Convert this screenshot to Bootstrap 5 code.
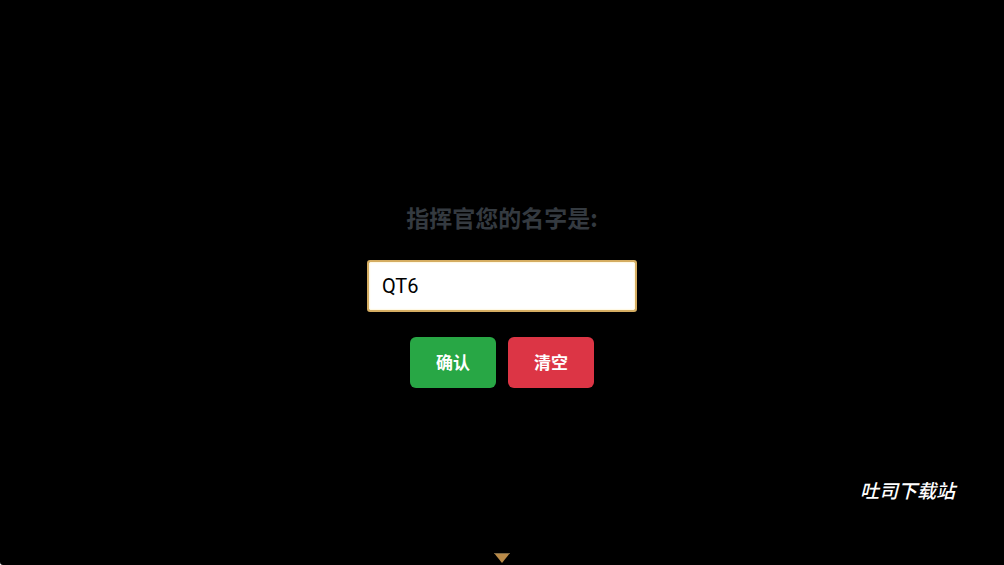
<!DOCTYPE html>
<html lang="zh-CN">
<head>
<meta charset="utf-8">
<meta name="viewport" content="width=device-width, initial-scale=1">
<title>指挥官您的名字是</title>
<link href="https://cdn.jsdelivr.net/npm/bootstrap@5.3.0/dist/css/bootstrap.min.css" rel="stylesheet">
<style>
body { background: #000; font-family: Roboto, "Noto Sans CJK SC", sans-serif; }
.name-screen { padding-top: 110px; }
.name-label { color: #343a40; font-family: "Noto Sans CJK SC", sans-serif; font-size: 23px; line-height: 34px; margin-bottom: 26px; }
.name-input { width: 270px; height: 52px; padding: 0 13px; font-size: 20px; color: #000; border: 2px solid #d5ad62; border-radius: 3px; box-shadow: inset 0 0 2px #ffe9a0; }
.name-input:focus { color: #000; border-color: #d5ad62; box-shadow: inset 0 0 2px #ffe9a0; }
.name-actions { gap: 12px; margin-top: 25px; }
.name-btn { width: 86px; height: 51px; padding: 2px 0 0; font-size: 17px; border: 0; border-radius: 6px; color: #fff; }
.confirm-btn, .confirm-btn:hover { background: #28a745; color: #fff; }
.clear-btn, .clear-btn:hover { background: #dc3545; color: #fff; }
.site-mark { font-size: 19px; line-height: 28px; padding-right: 49px; font-style: italic; }
.next-row { height: 59px; padding-bottom: 2px; }
.corner { left: 0; bottom: 0; }
</style>
</head>
<body class="d-flex flex-column min-vh-100">
<main class="name-screen flex-grow-1 d-flex flex-column align-items-center justify-content-center">
  <form class="d-flex flex-column align-items-center">
    <label class="name-label fw-bold" for="commander">指挥官您的名字是:</label>
    <input class="name-input form-control" id="commander" type="text" value="QT6" autocomplete="off">
    <div class="name-actions d-flex">
      <button class="name-btn confirm-btn btn fw-bold" type="button">确认</button>
      <button class="name-btn clear-btn btn fw-bold" type="reset">清空</button>
    </div>
  </form>
</main>
<footer>
  <div class="site-mark text-white text-end fw-medium">吐司下载站</div>
  <div class="next-row d-flex align-items-end justify-content-center">
    <svg width="16" height="10" viewBox="0 0 16 10" aria-hidden="true"><path d="M0 0h16L8 10z" fill="#b98a48"/><path d="M0 0h16l-1 1H1z" fill="#7c6846"/></svg>
  </div>
</footer>
<svg class="corner position-fixed" width="3" height="3" viewBox="0 0 3 3" aria-hidden="true"><path d="M0 0Q0 3 3 3H0z" fill="#fff"/></svg>
<script src="https://cdn.jsdelivr.net/npm/bootstrap@5.3.0/dist/js/bootstrap.bundle.min.js"></script>
</body>
</html>
